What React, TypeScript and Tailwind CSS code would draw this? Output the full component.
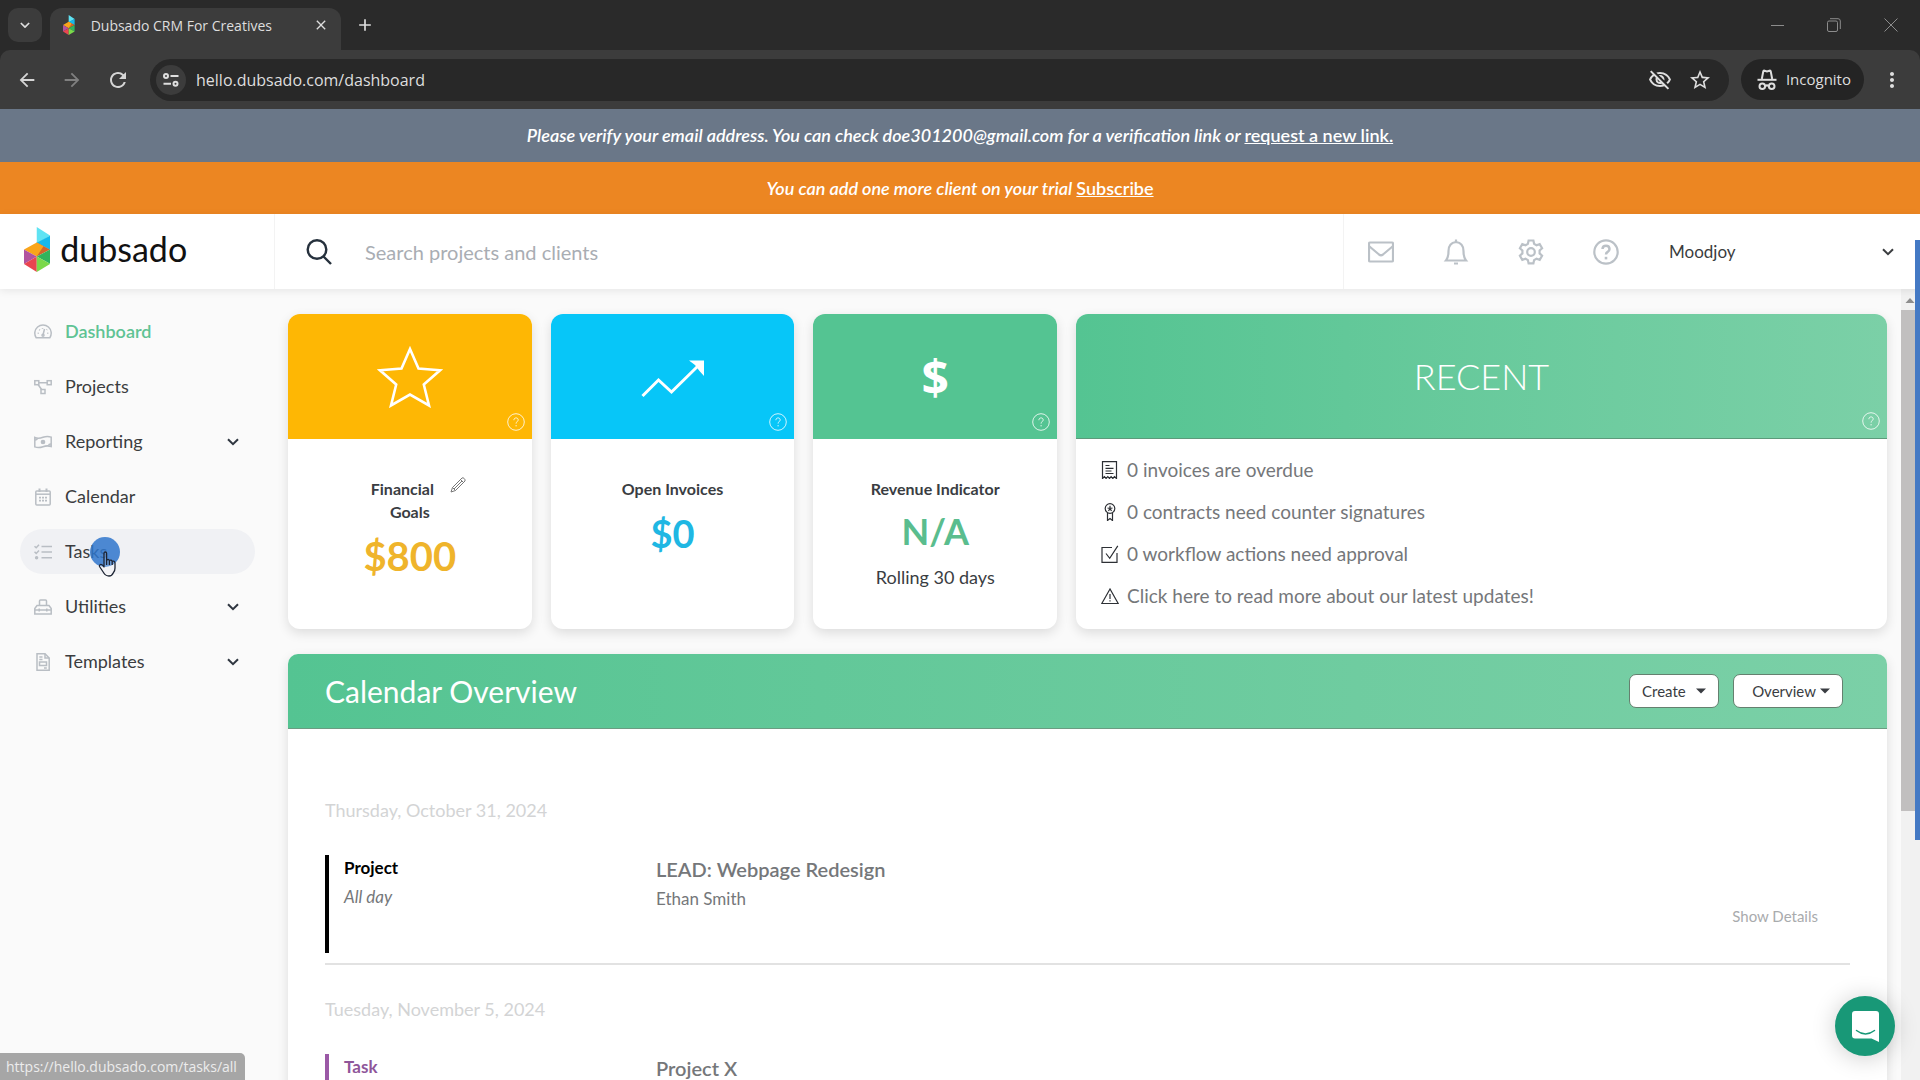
import type { ReactNode } from "react";
import {
  MdArrowBack,
  MdArrowForward,
  MdRefresh,
  MdStarBorder,
  MdMoreVert,
  MdClose,
  MdAdd,
  MdOutlineVisibilityOff,
} from "react-icons/md";

const thin = { fill: "none", stroke: "currentColor" } as const;

function Logo({ className }: { className: string }) {
  return (
    <svg viewBox="0 0 78 134" className={className} aria-hidden="true">
      <path d="M38 0 78 26 38 50Z" fill="#5fe3f3" />
      <path d="M78 26V68L38 47Z" fill="#16b9ea" />
      <path d="M38 46 78 67 38 88Z" fill="#d3642a" />
      <path d="M38 46 58 57 38 88 0 67Z" fill="#f9a51b" />
      <path d="M0 67 38 88 0 110Z" fill="#b1539f" />
      <path d="M38 88V134L0 110Z" fill="#ea4550" />
      <path d="M38 88 78 67V110Z" fill="#31b45c" />
      <path d="M38 88 78 110 38 134Z" fill="#7bd94a" />
    </svg>
  );
}

function Chevron({ className }: { className: string }) {
  return (
    <svg viewBox="0 0 12 8" className={className} {...thin} strokeWidth="2" aria-hidden="true">
      <path d="M1 1.2 6 6.2 11 1.2" />
    </svg>
  );
}

function Help() {
  return (
    <button aria-label="Help" className="absolute bottom-2 right-[7px] text-white/80">
      <svg viewBox="0 0 18 18" className="size-[18px]" {...thin} strokeWidth="1">
        <circle cx="9" cy="9" r="8.3" />
        <path d="M6.9 7.2C6.9 5.6 7.9 4.9 9.1 4.9s2.1.8 2.1 2c0 1.600-2.100 1.800-2.100 3.700M9.100 12v1.400" />
      </svg>
    </button>
  );
}

const navIcons: Record<string, ReactNode> = {
  Dashboard: (
    <>
      <path d="M2.200 14.800A8.200 8.200 0 1 1 15.800 14.800Z" />
      <path d="M9 12 10.500 6M3.700 10.300h1M13.300 10.300h1M5.200 6.600l.7.7M8.500 5v.8M12.600 6.900l.5-.5" />
      <circle cx="9" cy="12.200" r="1" />
    </>
  ),
  Projects: (
    <>
      <rect x=".8" y="2.700" width="4" height="4" />
      <rect x="13.200" y="2.700" width="4" height="4" />
      <rect x="7" y="11.500" width="4" height="4" />
      <path d="M4.800 4.700h8.400M4.200 6.700 7.600 11.500" />
    </>
  ),
  Reporting: (
    <>
      <path d="M.8 4.500c3 1.400 5.500.8 8.200-.2s5.200-1.200 8.200-.2v9.400c-3-1-5.500-.8-8.200.2s-5.200 1.300-8.200.2Z" />
      <circle cx="9" cy="9" r="1.600" fill="currentColor" />
      <path d="M1 7C2.500 7 3.300 6.200 3.400 5.200M17 11c-1.500 0-2.300.8-2.400 1.800" />
    </>
  ),
  Calendar: (
    <>
      <rect x="1.800" y="3" width="14.400" height="14" rx="1" />
      <path d="M2 6.200h14" />
      <path d="M5.500.6V4M12.500.6V4" strokeWidth="2" />
      <path d="M5 9.600h2M8 9.600h2M11 9.600h2M5 12.700h2M8 12.700h2M11 12.700h2" strokeWidth="1.800" />
    </>
  ),
  Tasks: (
    <>
      <path d="M.5 3.200 2.200 4.800 5 1.800M.5 8.800 2.200 10.400 5 7.400" />
      <path d="M7.500 3.500H18M7.500 9H18M7.500 14.800H18" strokeWidth="1.600" />
      <circle cx="2.600" cy="14.800" r="1" fill="currentColor" />
    </>
  ),
  Utilities: (
    <>
      <path d="M.8 16V10.500L3 7.500H15l2.200 3V16Z" />
      <path d="M5.500 7.500V3q0-1 1-1h5q1 0 1 1V7.500M.8 12H17.200M5.200 10.500v3M12.800 10.500v3" />
    </>
  ),
  Templates: (
    <>
      <path d="M3 .8h8L15.200 5V17.200H3Z" />
      <path d="M11 .8V5h4.200M5.300 4H8.500M5.300 6.500H8.500M5.500 9h7v3.500h-7ZM10 15h2.800" />
    </>
  ),
};

const navItems = [
  { label: "Dashboard", active: true },
  { label: "Projects" },
  { label: "Reporting", expandable: true },
  { label: "Calendar" },
  { label: "Tasks", hovered: true },
  { label: "Utilities", expandable: true },
  { label: "Templates", expandable: true },
];

function Pointer() {
  return (
    <span className="pointer-events-none absolute left-[70px] top-2 block">
      <span className="block size-[30px] rounded-full bg-[#2f76cb]/85" />
      <svg
        viewBox="0 0 20 26"
        className="absolute left-2 top-[14px] w-[20px]"
        fill="#fff"
        fillOpacity=".2"
        stroke="#1d2433"
        strokeWidth="1.300"
        strokeLinejoin="round"
      >
        <path d="M6 14V2.500Q6 1 7.300 1T8.600 2.500V9Q11 7.800 11.300 9.500 13.500 8.500 14 10.300 16.500 9.300 17 12V17Q17 20 15.500 21.500 14 25 11 25 7.500 25 5.500 21.500L1.500 15.500Q1 14 2.500 13.500T6 16Z" />
        <path d="M8.600 9v5M11.400 10v4M14.200 11v3" />
      </svg>
    </span>
  );
}

function Sidebar() {
  return (
    <nav aria-label="Main" className="flex w-[275px] shrink-0 flex-col gap-2.5 py-5 pl-5 pr-5">
      {navItems.map((item) => (
        <a
          key={item.label}
          href="#"
          className={`relative flex h-[45px] items-center gap-[13px] rounded-full pl-3.5 pr-4 text-[18px] ${
            item.hovered ? "bg-[#f0f1f4]" : ""
          } ${item.active ? "font-semibold text-[#5fc394]" : "text-[#3b3d40]"}`}
        >
          <svg viewBox="0 0 18 18" className="size-[18px] shrink-0 text-[#b9bec4]" {...thin} strokeWidth="1.500" aria-hidden="true">
            {navIcons[item.label]}
          </svg>
          <span className="grow">{item.label}</span>
          {item.expandable && <Chevron className="w-3 text-[#2f3640]" />}
          {item.hovered && <Pointer />}
        </a>
      ))}
    </nav>
  );
}

function BrowserChrome() {
  return (
    <div className="shrink-0 bg-[#2a2a2a] font-['Open_Sans',sans-serif] text-[#dedede]">
      <div className="flex h-[50px] items-end">
        <button aria-label="Search tabs" className="mb-2 ml-2 flex size-[34px] items-center justify-center rounded-[10px] bg-[#3c3c3c]">
          <Chevron className="w-2.5" />
        </button>
        <div className="ml-2 flex h-[42px] w-[291px] items-center rounded-t-[12px] bg-[#3c3c3c] pb-2 pl-[13px] pr-3">
          <Logo className="h-5" />
          <span className="ml-4 grow whitespace-nowrap text-[14px]">Dubsado CRM For Creatives</span>
          <button aria-label="Close tab">
            <MdClose className="size-4" />
          </button>
        </div>
        <button aria-label="New tab" className="mb-[15px] ml-[14px]">
          <MdAdd className="size-5" />
        </button>
        <div className="mb-[18px] ml-auto mr-[22px] flex items-center gap-[43px] text-[#8c8c8c]">
          <button aria-label="Minimize" className="h-px w-[13px] bg-[#8c8c8c]" />
          <button aria-label="Restore">
            <svg viewBox="0 0 14 14" className="size-[14px]" {...thin}>
              <rect x=".5" y="3" width="10" height="10.500" rx="1.500" />
              <path d="M3 .7h8q2.300 0 2.300 2.300v8" />
            </svg>
          </button>
          <button aria-label="Close window">
            <svg viewBox="0 0 14 14" className="size-[14px]" {...thin}>
              <path d="M.5.5l13 13M13.500.5l-13 13" />
            </svg>
          </button>
        </div>
      </div>
      <div className="flex h-[59px] items-center rounded-t-[10px] bg-[#3c3c3c] pl-4 pr-4">
        <button aria-label="Back">
          <MdArrowBack className="size-[22px] text-[#d5d5d5]" />
        </button>
        <button aria-label="Forward" className="ml-[23px]">
          <MdArrowForward className="size-[22px] text-[#808080]" />
        </button>
        <button aria-label="Reload" className="ml-[23px]">
          <MdRefresh className="size-[24px] text-[#d5d5d5]" />
        </button>
        <div className="ml-5 flex h-[42px] grow items-center rounded-full bg-[#282828] pl-1.5 pr-[17px]">
          <button aria-label="Site information" className="flex size-[30px] items-center justify-center rounded-full bg-[#3c3c3c]">
            <svg viewBox="0 0 16 14" className="w-4" {...thin} strokeWidth="2">
              <circle cx="3" cy="3" r="2" />
              <circle cx="12.500" cy="10.800" r="2" />
              <path d="M7.500 3H15.500M.5 10.800H8" />
            </svg>
          </button>
          <input
            aria-label="Address"
            defaultValue="hello.dubsado.com/dashboard"
            className="ml-[10px] grow bg-transparent text-[16px] outline-none"
          />
          <button aria-label="Third-party cookies blocked">
            <MdOutlineVisibilityOff className="size-6" />
          </button>
          <button aria-label="Bookmark" className="ml-4">
            <MdStarBorder className="size-6" />
          </button>
        </div>
        <button className="ml-3 flex h-[41px] items-center rounded-full bg-[#242424] pl-4 pr-[13px] text-[15px]">
          <svg viewBox="0 0 20 22" className="mr-[9px] w-5" fill="none" stroke="currentColor" strokeWidth="2" aria-hidden="true">
            <path d="M.5 10.800h19" />
            <path d="M4.800 10 6.300 2.300Q6.600 1.400 7.500 1.700L10 2.500 12.500 1.700Q13.400 1.400 13.700 2.300L15.200 10" />
            <circle cx="5.300" cy="17.200" r="2.800" />
            <circle cx="14.700" cy="17.200" r="2.800" />
            <path d="M8.300 17q1.700-1.300 3.400 0" />
          </svg>
          Incognito
        </button>
        <button aria-label="More" className="ml-4">
          <MdMoreVert className="size-6" />
        </button>
      </div>
    </div>
  );
}

const tools: { label: string; icon: ReactNode }[] = [
  {
    label: "Messages",
    icon: (
      <>
        <rect x="1" y="3.500" width="24" height="19" rx="1" />
        <path d="M1.500 7.500 11 15.500Q13 17 15 15.500L24.500 7.500" />
      </>
    ),
  },
  {
    label: "Notifications",
    icon: (
      <>
        <path d="M3 21.500Q5.500 18.500 5.500 12 5.500 4 13 3 20.500 4 20.500 12 20.500 18.500 23 21.500Z" />
        <path d="M13 .5V3M11 24.500h4" />
      </>
    ),
  },
  {
    label: "Settings",
    icon: (
      <>
        <path d="M10.600 1.500h4.800l.7 3.300 2.400 1.400 3.200-1.100 2.400 4.100-2.500 2.300v2.900l2.500 2.300-2.400 4.100-3.200-1.100-2.400 1.400-.7 3.300h-4.800l-.7-3.300-2.400-1.400-3.200 1.100-2.400-4.100 2.500-2.300v-2.900L1.900 9.200l2.400-4.100 3.200 1.100 2.400-1.400Z" />
        <circle cx="13" cy="13" r="3.800" />
      </>
    ),
  },
  {
    label: "Support",
    icon: (
      <>
        <circle cx="13" cy="13" r="11.700" />
        <path d="M9.500 10Q9.700 6.800 13 6.800T16.500 10Q16.500 11.800 14.700 12.800 13 13.700 13 15.500" strokeWidth="2.500" />
        <path d="M13 17.800v2.600" strokeWidth="2.600" />
      </>
    ),
  },
];

function Header() {
  return (
    <header className="relative z-10 flex h-[75px] shrink-0 bg-white shadow-[0_2px_8px_rgba(0,0,0,0.08)]">
      <a href="#" className="flex w-[275px] shrink-0 items-center border-r border-[#f3f3f3] pl-6">
        <Logo className="mb-1 h-[45px]" />
        <span className="mb-1.5 ml-[10px] text-[34px] leading-none text-[#111]">dubsado</span>
      </a>
      <label className="flex grow items-center pl-[31px]">
        <svg viewBox="0 0 26 26" className="size-[26px] text-[#26313d]" {...thin} strokeWidth="2.400" aria-hidden="true">
          <circle cx="11" cy="10.500" r="9.300" />
          <path d="M17.500 17.500 25 25" />
        </svg>
        <input
          type="search"
          aria-label="Search projects and clients"
          placeholder="Search projects and clients"
          className="ml-[33px] grow bg-transparent text-[20px] outline-none placeholder:text-[#a9adb3]"
        />
      </label>
      <div className="flex w-[577px] shrink-0 items-center border-l border-[#f3f3f3] pl-6 pr-[26px]">
        <div className="flex gap-[49px] text-[#bbc1c7]">
          {tools.map((tool) => (
            <button key={tool.label} aria-label={tool.label}>
              <svg viewBox="0 0 26 26" className="size-[26px]" {...thin} strokeWidth="2.200">
                {tool.icon}
              </svg>
            </button>
          ))}
        </div>
        <button className="ml-[50px] flex grow items-center justify-between text-[17px] text-[#3b3d40]">
          Moodjoy
          <Chevron className="w-3" />
        </button>
      </div>
    </header>
  );
}

function StatCard({ tone, icon, children }: { tone: string; icon: ReactNode; children: ReactNode }) {
  return (
    <section className="overflow-hidden rounded-[12px] bg-white text-center shadow-[0_4px_12px_rgba(0,0,0,0.12)]">
      <div className={`relative flex h-[125px] items-center justify-center text-white ${tone}`}>
        {icon}
        <Help />
      </div>
      <div className="pt-[38px]">{children}</div>
    </section>
  );
}

const recent: { text: string; icon: ReactNode }[] = [
  {
    text: "0 invoices are overdue",
    icon: <path d="M1.500 17.500V.7h14v16.800l-2-1.800-1.700 1.800-1.700-1.800-1.600 1.800-1.700-1.800-1.700 1.800-1.700-1.800ZM4.500 4.500h4M4.500 7.300h8M4.500 10h6M4.500 12.500h8" />,
  },
  {
    text: "0 contracts need counter signatures",
    icon: (
      <>
        <circle cx="9" cy="5.500" r="4.800" />
        <path d="M6.500 10v7.500L9 15.500l2.500 2V10M9 2.800v2.700M6.500 5l2.500.5 2.500-.5M7.500 8 9 5.500 10.500 8" />
      </>
    ),
  },
  {
    text: "0 workflow actions need approval",
    icon: <path d="M11 2.500H1V17.300H16V8M5 8.500 8.700 13.300 16.800.8" />,
  },
  {
    text: "Click here to read more about our latest updates!",
    icon: <path d="M9 2 .8 16.500H17.200ZM9 7v5M9 13.300v1.300" />,
  },
];

const events: { date: string; kind: string; title: string; tone: string; time?: string; client?: string }[] = [
  {
    date: "Thursday, October 31, 2024",
    kind: "Project",
    time: "All day",
    title: "LEAD: Webpage Redesign",
    client: "Ethan Smith",
    tone: "border-black text-black",
  },
  {
    date: "Tuesday, November 5, 2024",
    kind: "Task",
    title: "Project X",
    tone: "border-[#9b59a6] text-[#8f569a]",
  },
];

function Caret() {
  return (
    <svg viewBox="0 0 10 6" className="w-2.5" fill="currentColor" aria-hidden="true">
      <path d="M0 .5H10L5 5.500Z" />
    </svg>
  );
}

function Dashboard() {
  return (
    <main className="grow overflow-hidden pb-4 pl-[13px] pr-[14px] pt-[25px]">
      <div className="grid grid-cols-[244fr_244fr_244fr_812fr] gap-[19px]">
        <StatCard
          tone="bg-[#feb704]"
          icon={
            <svg viewBox="0 0 66 62" className="w-[66px]" {...thin} strokeWidth="2.600">
              <path d="M33 3 41.500 22.500 63 24.300 46.800 38.500 52 59.500 33 48.500 14 59.500 19.200 38.500 3 24.300 24.500 22.500Z" />
            </svg>
          }
        >
          <h2 className="relative mx-auto w-28 text-[16px] font-bold leading-[23px] text-[#3a3d42]">
            <span className="mr-[15px]">Financial</span> Goals
            <button aria-label="Edit financial goals" className="absolute right-0 top-0">
              <svg viewBox="0 0 16 16" className="size-4 text-[#777]" {...thin} strokeWidth="1">
                <path d="M1 15 2.500 10.500 12 1Q13 .3 14.200 1.500T15 4L5.500 13.500ZM2.500 10.500l3 3M10.500 2.500l3 3M4 12l8-8" />
              </svg>
            </button>
          </h2>
          <p className="mt-3 text-[40px] font-bold leading-[42px] text-[#efb42b]">$800</p>
        </StatCard>
        <StatCard
          tone="bg-[#07c6f8]"
          icon={
            <svg viewBox="0 0 64 40" className="mt-1 w-16" {...thin} strokeWidth="3">
              <path d="M1.500 37 17.500 21 30.500 33 58 6" />
              <path d="M48 1.500H63V17L58.500 12 54 6Z" fill="currentColor" stroke="none" />
            </svg>
          }
        >
          <h2 className="text-[16px] font-bold leading-[23px] text-[#3a3d42]">Open Invoices</h2>
          <p className="mt-3 text-[38px] font-bold leading-[42px] text-[#1fb7e3]">$0</p>
        </StatCard>
        <StatCard
          tone="bg-[#54c492]"
          icon={<span className="font-['Open_Sans',sans-serif] text-[48px] font-bold leading-none">$</span>}
        >
          <h2 className="text-[16px] font-bold leading-[23px] text-[#3a3d42]">Revenue Indicator</h2>
          <p className="mt-2.5 text-[36px] font-bold leading-[42px] text-[#5abd8e]">N/A</p>
          <p className="mt-3.5 text-[18px] leading-[23px] text-[#3a3d42]">Rolling 30 days</p>
        </StatCard>
        <section className="overflow-hidden rounded-[12px] bg-white shadow-[0_4px_12px_rgba(0,0,0,0.12)]">
          <div className="relative flex h-[125px] items-center justify-center border-b border-[#5d9a7b] bg-linear-to-r from-[#54c492] to-[#7bd0a7]">
            <h2 className="text-[36px] font-light leading-none text-white">RECENT</h2>
            <Help />
          </div>
          <ul className="px-[25px] pb-[12px] pt-[10px] text-[19px] text-[#75777a]">
            {recent.map((item) => (
              <li key={item.text}>
                <a href="#" className="flex h-[42px] items-center gap-2">
                  <svg viewBox="0 0 18 18" className="size-[18px] shrink-0 text-[#2d3035]" {...thin} strokeWidth="1.200" aria-hidden="true">
                    {item.icon}
                  </svg>
                  {item.text}
                </a>
              </li>
            ))}
          </ul>
        </section>
      </div>

      <section className="mt-[25px] overflow-hidden rounded-[10px] bg-white shadow-[0_4px_12px_rgba(0,0,0,0.12)]">
        <div className="flex h-[75px] items-center gap-[14px] border-b border-[#6b9c82] bg-linear-to-r from-[#54c492] to-[#7bd0a7] pl-[37px] pr-11">
          <h2 className="grow text-[30px] text-white">Calendar Overview</h2>
          <button className="flex h-[34px] w-[90px] items-center justify-between rounded-[7px] border border-[#65806f] bg-white px-3 text-[15px] text-[#3a3d42]">
            Create
            <Caret />
          </button>
          <button className="flex h-[34px] w-[110px] items-center justify-end gap-1 rounded-[7px] border border-[#65806f] bg-white px-3 text-[15px] text-[#3a3d42]">
            Overview
            <Caret />
          </button>
        </div>
        <div className="px-[37px] pt-[37px]">
          {events.map((event) => (
            <article key={event.date} className="border-b-2 border-[#e2e2e2] pb-[10px] pt-[30px]">
              <h3 className="text-[18px] leading-7 text-[#d3d4d5]">{event.date}</h3>
              <div className={`mt-[31px] flex h-[98px] border-l-4 pl-[15px] ${event.tone}`}>
                <div className="w-[312px] shrink-0 space-y-1 text-[17px] leading-[25px]">
                  <p className="font-bold">{event.kind}</p>
                  {event.time && <p className="italic text-[#75777a]">{event.time}</p>}
                </div>
                <div className="grow space-y-0.5 leading-7 text-[#75777a]">
                  <h4 className="text-[20px] font-semibold">{event.title}</h4>
                  {event.client && <p className="text-[17px]">{event.client}</p>}
                </div>
                {event.client && (
                  <button className="mr-8 mt-6 self-center text-[15px] text-[#a9abad]">Show Details</button>
                )}
              </div>
            </article>
          ))}
        </div>
      </section>
    </main>
  );
}

export default function App() {
  return (
    <div className="relative flex h-screen flex-col overflow-hidden bg-[#fafafa] font-['Lato',sans-serif]">
      <BrowserChrome />
      <p className="flex h-[53px] shrink-0 items-center justify-center whitespace-pre bg-[#6a7788] text-[18px] font-semibold italic text-white">
        Please verify your email address. You can check doe301200@gmail.com for a verification link or{" "}
        <a href="#" className="not-italic underline">request a new link.</a>
      </p>
      <p className="flex h-[52px] shrink-0 items-center justify-center whitespace-pre bg-[#ec8622] text-[18px] font-semibold italic text-white">
        You can add one more client on your trial{" "}
        <a href="#" className="not-italic underline">Subscribe</a>
      </p>
      <Header />
      <div className="flex min-h-0 grow">
        <Sidebar />
        <Dashboard />
        <div className="flex w-[19px] shrink-0 flex-col bg-[#f1f1f1]">
          <svg viewBox="0 0 19 21" className="h-[21px]" fill="#8d8d8d" aria-hidden="true">
            <path d="M4.500 14 9 9 13.500 14Z" />
          </svg>
          <div className="h-[501px] bg-[#c1bfbf]" />
        </div>
      </div>

      <div className="absolute right-0 top-60 z-20 h-[600px] w-[5px] bg-[#4479c4]" />
      <button
        aria-label="Open chat"
        className="absolute bottom-6 right-[25px] z-20 flex size-[60px] items-center justify-center rounded-full bg-[#189877] shadow-[0_2px_24px_rgba(0,0,0,0.2)]"
      >
        <svg viewBox="0 0 27 31" className="w-[27px]" aria-hidden="true">
          <path d="M3 0H24Q27 0 27 3V31L19.500 27.500H3Q0 27.500 0 24.500V3Q0 0 3 0Z" fill="#fff" />
          <path d="M4.500 19.500Q13.500 26.500 22.500 19.500" fill="none" stroke="#189877" strokeWidth="1.500" strokeLinecap="round" />
        </svg>
      </button>
      <div className="absolute bottom-0 left-0 z-20 flex h-[27px] items-center rounded-tr-[5px] bg-[#a6a6a6] pl-1.5 pr-2 font-['Open_Sans',sans-serif] text-[14px] text-[#ececec]">
        https://hello.dubsado.com/tasks/all
      </div>
    </div>
  );
}
